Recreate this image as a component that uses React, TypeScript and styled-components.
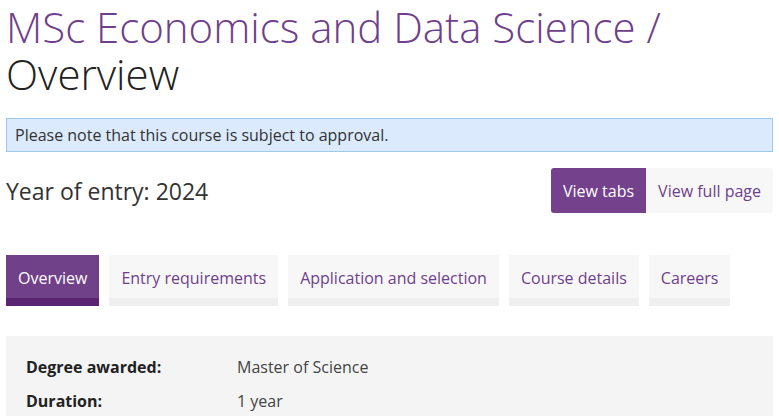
import React from "react";
import styled, { createGlobalStyle } from "styled-components";

const Global = createGlobalStyle`
  html, body { margin: 0; padding: 0; background: #fff; }
  body { font-family: "Open Sans", "Liberation Sans", sans-serif; color: #333; }
  * { box-sizing: border-box; }
`;

const Page = styled.div`
  padding: 0 6px 0 6px;
`;

const Title = styled.h1`
  margin: 3px 0 0;
  font-size: 42px;
  line-height: 47px;
  font-weight: 300;
  color: #222;
`;

const Crumb = styled.span`
  color: #6f3f8c;
`;

const Notice = styled.div`
  margin-top: 21px;
  background: #dbeafd;
  border: 1px solid #9fc8f1;
  padding: 4px 8px;
  font-size: 16px;
  line-height: 24px;
  color: #333;
`;

const EntryRow = styled.div`
  margin-top: 16px;
  display: flex;
  align-items: center;
  justify-content: space-between;
`;

const Year = styled.div`
  font-size: 23px;
  line-height: 32px;
  color: #333;
`;

const Toggle = styled.div`
  display: flex;
  border-radius: 3px;
  overflow: hidden;
`;

const ToggleBtn = styled.div<{ $active?: boolean }>`
  height: 45px;
  display: flex;
  align-items: center;
  padding: 0 12px;
  font-size: 16px;
  background: ${(p) => (p.$active ? "#74418c" : "#f7f7f7")};
  color: ${(p) => (p.$active ? "#fff" : "#6f3f8c")};
`;

const Tabs = styled.div`
  margin-top: 42px;
  display: flex;
  gap: 10px;
`;

const Tab = styled.div<{ $active?: boolean }>`
  height: 51px;
  padding: 11px 12px 0;
  font-size: 16px;
  line-height: 24px;
  background: ${(p) => (p.$active ? "#704089" : "#f7f7f7")};
  border-bottom: 8px solid ${(p) => (p.$active ? "#5a2473" : "#efefef")};
  color: ${(p) => (p.$active ? "#fff" : "#6f3f8c")};
`;

const Info = styled.div`
  margin-top: 30px;
  background: #f4f4f4;
  padding: 19px 20px 20px;
  display: grid;
  grid-template-columns: 211px 1fr;
  row-gap: 10px;
  font-size: 16px;
  line-height: 24px;
`;

const Label = styled.div`
  font-weight: 700;
  color: #222;
`;

const Value = styled.div`
  color: #444;
`;

const tabs = ["Overview", "Entry requirements", "Application and selection", "Course details", "Careers"];

export default function App() {
  return (
    <Page>
      <Global />
      <Title>
        <Crumb>MSc Economics and Data Science /</Crumb>
        <br />
        Overview
      </Title>
      <Notice>Please note that this course is subject to approval.</Notice>
      <EntryRow>
        <Year>Year of entry: 2024</Year>
        <Toggle>
          <ToggleBtn $active>View tabs</ToggleBtn>
          <ToggleBtn>View full page</ToggleBtn>
        </Toggle>
      </EntryRow>
      <Tabs>
        {tabs.map((t, i) => (
          <Tab key={t} $active={i === 0}>{t}</Tab>
        ))}
      </Tabs>
      <Info>
        <Label>Degree awarded:</Label>
        <Value>Master of Science</Value>
        <Label>Duration:</Label>
        <Value>1 year</Value>
      </Info>
    </Page>
  );
}
